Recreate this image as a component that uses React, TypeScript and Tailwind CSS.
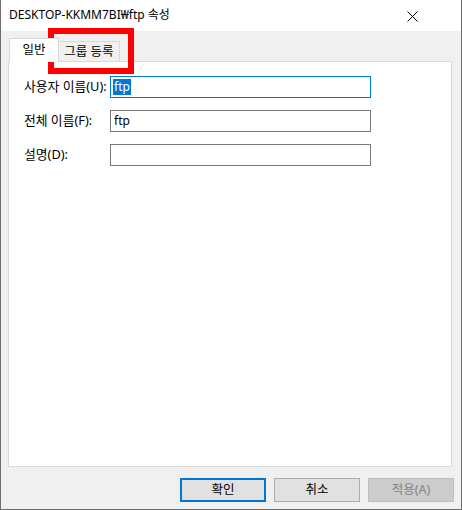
import React from "react";

const font = {
  fontFamily: '"Noto Sans", "Noto Sans CJK KR", sans-serif',
};

export default function App() {
  return (
    <div
      className="relative w-[462px] h-[510px] flex flex-col bg-[#f0f0f0] border-l border-r border-b border-[#6e6e6e] text-[12px] text-black overflow-hidden"
      style={font}
    >
      {/* Title bar */}
      <div className="h-[31px] shrink-0 bg-white flex items-center justify-between pl-[8px] pr-[43px]">
        <span className="leading-none mt-[-1px]">DESKTOP-KKMM7BI₩ftp 속성</span>
        <svg width="11" height="11" viewBox="0 0 11 11" className="mt-[1px]">
          <path d="M0.5 0.5 L10.5 10.5 M10.5 0.5 L0.5 10.5" stroke="#000" strokeWidth="1" />
        </svg>
      </div>

      {/* Body */}
      <div className="flex-1 flex flex-col pl-[7px] pr-[9px] pt-[7px]">
        {/* Tabs */}
        <div className="h-[23px] flex items-end pl-[1px]">
          <div className="relative z-10 h-[24px] w-[50px] -mb-px bg-white border-t border-l border-r border-[#d9d9d9] flex items-start justify-center pt-[3px]">
            <span className="leading-[16px] text-[12.5px]">일반</span>
          </div>
          <div className="h-[20px] w-[62px] -ml-px bg-[#f0f0f0] border-t border-r border-l border-[#d9d9d9] flex items-center justify-center">
            <span className="leading-[16px] mt-[1px] text-[12.5px]">그룹 등록</span>
          </div>
        </div>

        {/* Panel */}
        <div className="h-[406px] bg-white border border-[#d9d9d9] pl-[15px] pt-[14px] flex flex-col gap-[12px]">
          <div className="flex items-center h-[22px]">
            <span className="w-[86px] shrink-0 text-[12.8px] whitespace-nowrap">사용자 이름(U):</span>
            <div className="w-[261px] h-[22px] border border-[#0078d7] flex items-center pl-[2px]">
              <span className="bg-[#0078d7] text-white leading-[16px] px-[1px]">ftp</span>
            </div>
          </div>
          <div className="flex items-center h-[22px]">
            <span className="w-[86px] shrink-0 text-[12.8px] whitespace-nowrap">전체 이름(F):</span>
            <div className="w-[261px] h-[22px] border border-[#7a7a7a] flex items-center pl-[3px]">
              <span className="leading-[16px]">ftp</span>
            </div>
          </div>
          <div className="flex items-center h-[22px]">
            <span className="w-[86px] shrink-0 text-[12.8px] whitespace-nowrap">설명(D):</span>
            <div className="w-[261px] h-[22px] border border-[#7a7a7a]" />
          </div>
        </div>

        {/* Buttons */}
        <div className="mt-[11px] flex justify-end gap-[8px] mr-[-2px]">
          <button className="w-[86px] h-[24px] bg-[#e1e1e1] border-2 border-[#0078d7] flex items-center justify-center leading-none text-[12.5px]">
            확인
          </button>
          <button className="w-[86px] h-[24px] bg-[#e1e1e1] border border-[#adadad] flex items-center justify-center leading-none text-[12.5px]">
            취소
          </button>
          <button className="w-[86px] h-[24px] bg-[#cccccc] border border-[#bfbfbf] text-[#838383] flex items-center justify-center leading-none text-[12.5px]">
            적용(A)
          </button>
        </div>
      </div>

      {/* Red annotation box */}
      <div className="absolute left-[47px] top-[28px] w-[86px] h-[46px] border-[6px] border-[#ff0000] pointer-events-none" />
    </div>
  );
}
